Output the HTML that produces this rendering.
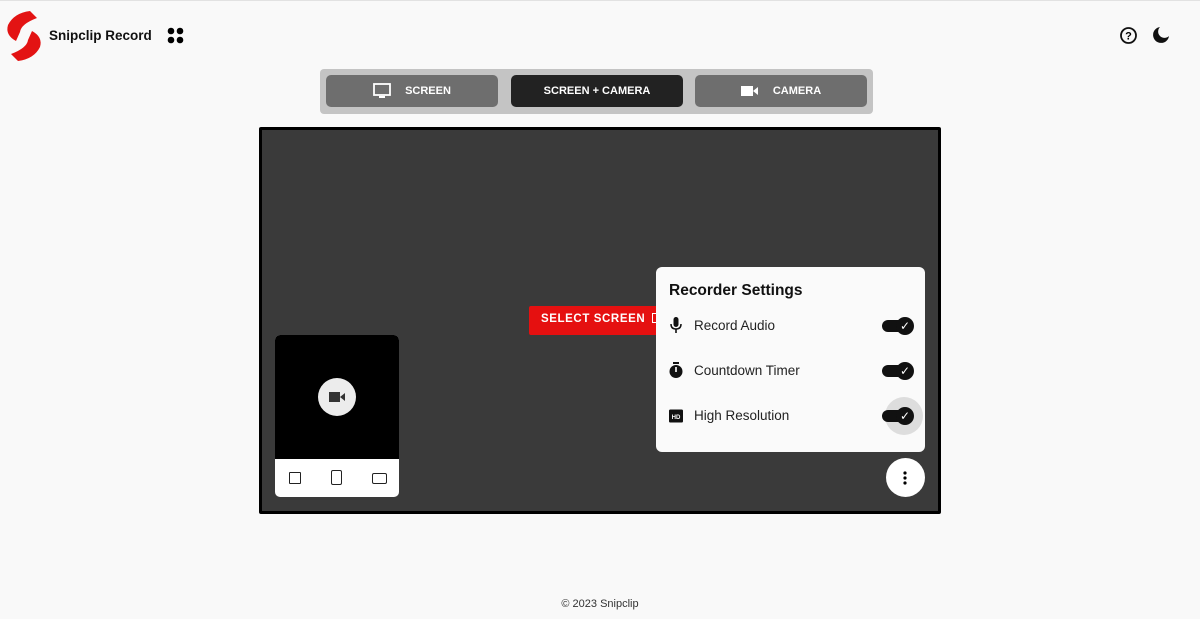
<!DOCTYPE html>
<html><head><style>
*{box-sizing:border-box;margin:0;padding:0}
body{width:1200px;height:619px;background:#f9f9f9;font-family:"Liberation Sans",sans-serif;position:relative;overflow:hidden}
.a{position:absolute}
.tg{left:320px;top:69px;width:553px;height:45px;background:#c4c4c4;border-radius:4px}
.b{top:75px;width:172px;height:32px;border-radius:5px;background:#6e6e6e;color:#fff;font-size:11px;font-weight:bold;display:flex;align-items:center;justify-content:center;gap:14px}
.main{left:259px;top:127px;width:682px;height:387px;background:#3a3a3a;border:3px solid #000;border-radius:2px}
.panel{left:656px;top:267px;width:269px;height:185px;background:#fafafa;border-radius:6px}
.row{position:absolute;left:13px;display:flex;align-items:center;font-size:13.5px;color:#222;gap:11px}
.sw{position:absolute;left:226px;width:30px;height:12px;background:#111;border-radius:6px}
.sw i{position:absolute;right:-2px;top:-3px;width:18px;height:18px;border-radius:50%;background:#111;color:#fff;font-style:normal;font-size:12px;text-align:center;line-height:18px}
</style></head><body>
<div class="a" style="left:0;top:0;width:1200px;height:1px;background:#e2e2e2"></div>
<svg class="a" style="left:5px;top:10px" width="38" height="52" viewBox="0 0 38 52"><path d="M25 1 L32 8 Q16 14 15 22 L11 31 Q0 25 3 15 Q9 3 25 1Z" fill="#e31313"/><path d="M13 51 L6 44 Q22 38 23 30 L27 21 Q38 27 35 37 Q29 49 13 51Z" fill="#e31313"/></svg>
<div class="a" style="left:49px;top:28px;font-size:13.5px;font-weight:bold;color:#111">Snipclip Record</div>
<svg class="a" style="left:167px;top:27px" width="18" height="18"><circle cx="4" cy="4" r="3.3"/><circle cx="13" cy="4" r="3.3"/><circle cx="4" cy="13" r="3.3"/><circle cx="13" cy="13" r="3.3"/></svg>
<svg class="a" style="left:1119px;top:26px" width="19" height="19" viewBox="0 0 19 19"><circle cx="9.5" cy="9.5" r="7.5" fill="none" stroke="#111" stroke-width="1.8"/><text x="9.5" y="13.5" font-size="11" font-weight="bold" text-anchor="middle" font-family="Liberation Sans">?</text></svg>
<svg class="a" style="left:1152px;top:26px" width="18" height="18" viewBox="0 0 18 18"><path d="M8 1 A8 8 0 1 0 17 10 A6 6 0 0 1 8 1Z" fill="#111"/></svg>
<div class="a tg"></div>
<div class="a b" style="left:326px"><svg width="18" height="16" viewBox="0 0 18 16"><rect x="1" y="1" width="16" height="11" fill="none" stroke="#fff" stroke-width="1.8"/><rect x="6" y="13" width="6" height="2" fill="#fff"/></svg>SCREEN</div>
<div class="a b" style="left:511px;background:#222">SCREEN + CAMERA</div>
<div class="a b" style="left:695px"><svg width="18" height="12" viewBox="0 0 18 12"><rect x="0" y="1" width="12" height="10" fill="#fff"/><path d="M12 6 L17 2 V10Z" fill="#fff"/></svg>CAMERA</div>
<div class="a main"></div>
<div class="a" style="left:529px;top:306px;width:136px;height:29px;background:#e51010;border-radius:2px;color:#fff;font-size:11.5px;font-weight:bold;letter-spacing:.6px;padding:7px 0 0 12px;white-space:nowrap;overflow:hidden">SELECT SCREEN <span style="display:inline-block;width:13px;height:10px;border:1.5px solid #fff;margin-left:3px;vertical-align:-1px"></span></div>
<div class="a" style="left:275px;top:335px;width:124px;height:162px;background:#fff;border-radius:5px;overflow:hidden"><div style="height:124px;background:#000"></div></div>
<div class="a" style="left:318px;top:378px;width:38px;height:38px;border-radius:50%;background:#ececec"></div>
<svg class="a" style="left:329px;top:391px" width="16" height="12"><rect x="0" y="1" width="11" height="10" fill="#333"/><path d="M11 6 L16 2 V10Z" fill="#333"/></svg>
<div class="a" style="left:289px;top:472px;width:12px;height:12px;border:1.6px solid #222;border-radius:1px"></div>
<div class="a" style="left:331px;top:470px;width:11px;height:15px;border:1.6px solid #222;border-radius:2px"></div>
<div class="a" style="left:372px;top:473px;width:15px;height:11px;border:1.6px solid #222;border-radius:2px"></div>
<div class="a panel">
<div style="position:absolute;left:13px;top:15px;font-size:15.5px;font-weight:bold;color:#111">Recorder Settings</div>
<div class="row" style="top:50px"><svg width="14" height="16" viewBox="0 0 14 16"><rect x="4.5" y="0" width="5" height="10" rx="2.5" fill="#111"/><path d="M2 7 Q2 12 7 12 Q12 12 12 7" fill="none" stroke="#111" stroke-width="1.5"/><rect x="6.2" y="12" width="1.6" height="4" fill="#111"/></svg>Record Audio</div>
<div class="row" style="top:95px"><svg width="14" height="16" viewBox="0 0 14 16"><rect x="4" y="0" width="6" height="2" fill="#111"/><circle cx="7" cy="9.5" r="6.5" fill="#111"/><rect x="6.2" y="5" width="1.6" height="5" fill="#fff"/></svg>Countdown Timer</div>
<div class="row" style="top:141px"><svg width="14" height="14" viewBox="0 0 15 14"><rect width="15" height="14" rx="1.5" fill="#111"/><text x="7.5" y="10" font-size="6.5" fill="#fff" font-weight="bold" text-anchor="middle" font-family="Liberation Sans">HD</text></svg>High Resolution</div>
<div class="sw" style="top:53px"><i>✓</i></div>
<div class="sw" style="top:98px"><i>✓</i></div>
<div style="position:absolute;left:229px;top:130px;width:38px;height:38px;border-radius:50%;background:#ddd"></div>
<div class="sw" style="top:143px"><i>✓</i></div>
</div>
<div class="a" style="left:886px;top:458px;width:39px;height:39px;border-radius:50%;background:#fff"></div>
<svg class="a" style="left:903px;top:471px" width="4" height="14"><circle cx="2" cy="2" r="1.6"/><circle cx="2" cy="7" r="1.6"/><circle cx="2" cy="12" r="1.6"/></svg>
<div class="a" style="left:0;width:1200px;top:598px;text-align:center;font-size:11px;color:#333">© 2023 Snipclip</div>
</body></html>
